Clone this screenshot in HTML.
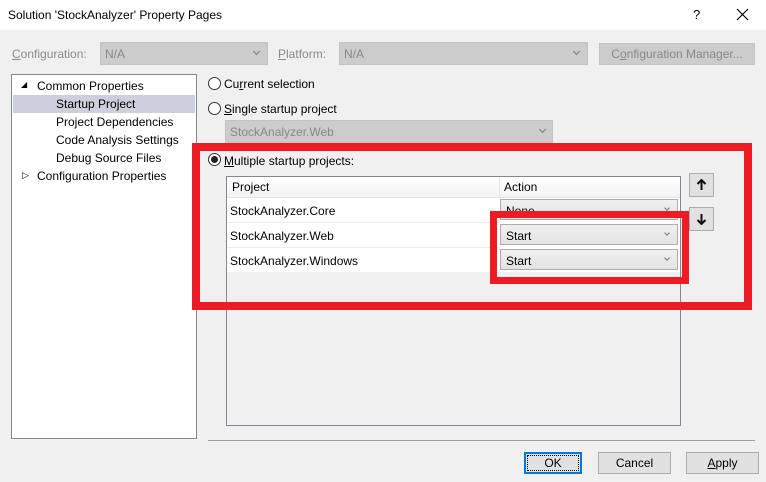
<!DOCTYPE html>
<html><head><style>
*{box-sizing:border-box;margin:0;padding:0}
body{width:766px;height:482px;background:#f0f0f0;font-family:"Liberation Sans",sans-serif;font-size:12px;color:#000;position:relative;overflow:hidden}
.a{position:absolute}
.t{position:absolute;white-space:nowrap}
.cb{position:absolute;background:#ccc;border:1px solid #c3c3c3;color:#888}
.radio{position:absolute;width:13px;height:13px;border:1px solid #333;border-radius:50%;background:#fff}
.btn{position:absolute;background:#e1e1e1;border:1px solid #adadad;text-align:center;line-height:20px}
.chev{position:absolute;width:5px;height:5px;border-right:1px solid #777;border-bottom:1px solid #777;transform:rotate(45deg)}
.sel{position:absolute;left:500px;width:178px;height:21px;background:linear-gradient(#f0f0f0,#e3e3e3);border:1px solid #acacac;padding-left:5px;line-height:22px}
</style></head><body>
<div class="a" style="left:0;top:0;width:766px;height:30px;background:#fff"></div>
<div class="t" style="left:8px;top:8px">Solution 'StockAnalyzer' Property Pages</div>
<div class="t" style="left:693px;top:7px;font-size:13px">?</div>
<svg class="a" style="left:736px;top:8px" width="13" height="13"><path d="M1 1L12 12M12 1L1 12" stroke="#000" stroke-width="1.2"/></svg>

<div class="t" style="left:12px;top:47px;color:#8a8a8a"><u>C</u>onfiguration:</div>
<div class="cb" style="left:100px;top:42px;width:168px;height:23px"><span class="t" style="left:4px;top:4px">N/A</span><div class="chev" style="left:153px;top:6px"></div></div>
<div class="t" style="left:278px;top:47px;color:#8a8a8a"><u>P</u>latform:</div>
<div class="cb" style="left:339px;top:42px;width:249px;height:23px"><span class="t" style="left:4px;top:4px">N/A</span><div class="chev" style="left:234px;top:6px"></div></div>
<div class="cb" style="left:599px;top:43px;width:156px;height:22px;text-align:center;line-height:20px">C<u>o</u>nfiguration Manager...</div>

<div class="a" style="left:11px;top:74px;width:186px;height:365px;background:#fff;border:1px solid #828790"></div>
<div class="a" style="left:13px;top:95px;width:182px;height:18px;background:#cdd0dc"></div>
<div class="t" style="left:21px;top:80px;font-size:8px">◢</div>
<div class="t" style="left:37px;top:79px">Common Properties</div>
<div class="t" style="left:56px;top:97px">Startup Project</div>
<div class="t" style="left:56px;top:115px">Project Dependencies</div>
<div class="t" style="left:56px;top:133px">Code Analysis Settings</div>
<div class="t" style="left:56px;top:151px">Debug Source Files</div>
<div class="t" style="left:22px;top:170px;font-size:9px">▷</div>
<div class="t" style="left:37px;top:169px">Configuration Properties</div>

<div class="radio" style="left:208px;top:77px"></div>
<div class="t" style="left:224px;top:77px">Cu<u>r</u>rent selection</div>
<div class="radio" style="left:208px;top:102px"></div>
<div class="t" style="left:224px;top:102px"><u>S</u>ingle startup project</div>
<div class="cb" style="left:225px;top:120px;width:328px;height:23px"><span class="t" style="left:4px;top:4px">StockAnalyzer.Web</span><div class="chev" style="left:314px;top:6px"></div></div>
<div class="radio" style="left:208px;top:153px"><div class="a" style="left:2px;top:2px;width:7px;height:7px;border-radius:50%;background:#222"></div></div>
<div class="t" style="left:224px;top:154px"><u>M</u>ultiple startup projects:</div>

<div class="a" style="left:226px;top:176px;width:455px;height:250px;border:1px solid #828790;background:#f0f0f0"></div>
<div class="a" style="left:227px;top:177px;width:453px;height:21px;background:linear-gradient(#fff,#f3f3f3);border-bottom:1px solid #e5e5e5"></div>
<div class="a" style="left:499px;top:177px;width:1px;height:21px;background:#e5e5e5"></div>
<div class="t" style="left:232px;top:180px">Project</div>
<div class="t" style="left:504px;top:180px">Action</div>
<div class="a" style="left:227px;top:198px;width:453px;height:74px;background:#fff"></div>
<div class="a" style="left:227px;top:222px;width:272px;height:1px;background:#ececec"></div>
<div class="a" style="left:227px;top:247px;width:272px;height:1px;background:#ececec"></div>
<div class="t" style="left:230px;top:204px">StockAnalyzer.Core</div>
<div class="t" style="left:230px;top:229px">StockAnalyzer.Web</div>
<div class="t" style="left:230px;top:254px">StockAnalyzer.Windows</div>
<div class="sel" style="top:199px">None<div class="chev" style="left:164px;top:6px;width:4px;height:4px"></div></div>
<div class="sel" style="top:224px">Start<div class="chev" style="left:164px;top:6px;width:4px;height:4px"></div></div>
<div class="sel" style="top:249px">Start<div class="chev" style="left:164px;top:6px;width:4px;height:4px"></div></div>

<div class="btn" style="left:689px;top:173px;width:25px;height:24px"><svg width="11" height="12" style="margin-top:5px"><path d="M5.5 1V11M1.5 5L5.5 1L9.5 5" stroke="#111" stroke-width="2" fill="none"/></svg></div>
<div class="btn" style="left:689px;top:207px;width:25px;height:24px"><svg width="11" height="12" style="margin-top:5px"><path d="M5.5 11V1M1.5 7L5.5 11L9.5 7" stroke="#111" stroke-width="2" fill="none"/></svg></div>

<div class="a" style="left:192px;top:143px;width:560px;height:167px;border:8px solid #ed1c24"></div>
<div class="a" style="left:490px;top:211px;width:199px;height:73px;border:7px solid #ed1c24"></div>

<div class="a" style="left:208px;top:440px;width:547px;height:1px;background:#a0a0a0"></div>
<div class="btn" style="left:524px;top:452px;width:58px;height:22px;border:2px solid #0078d7;line-height:18px"><div style="border:1px dotted #000;margin:1px;line-height:14px">OK</div></div>
<div class="btn" style="left:598px;top:452px;width:73px;height:22px">Cancel</div>
<div class="btn" style="left:686px;top:452px;width:73px;height:22px"><u>A</u>pply</div>
</body></html>
